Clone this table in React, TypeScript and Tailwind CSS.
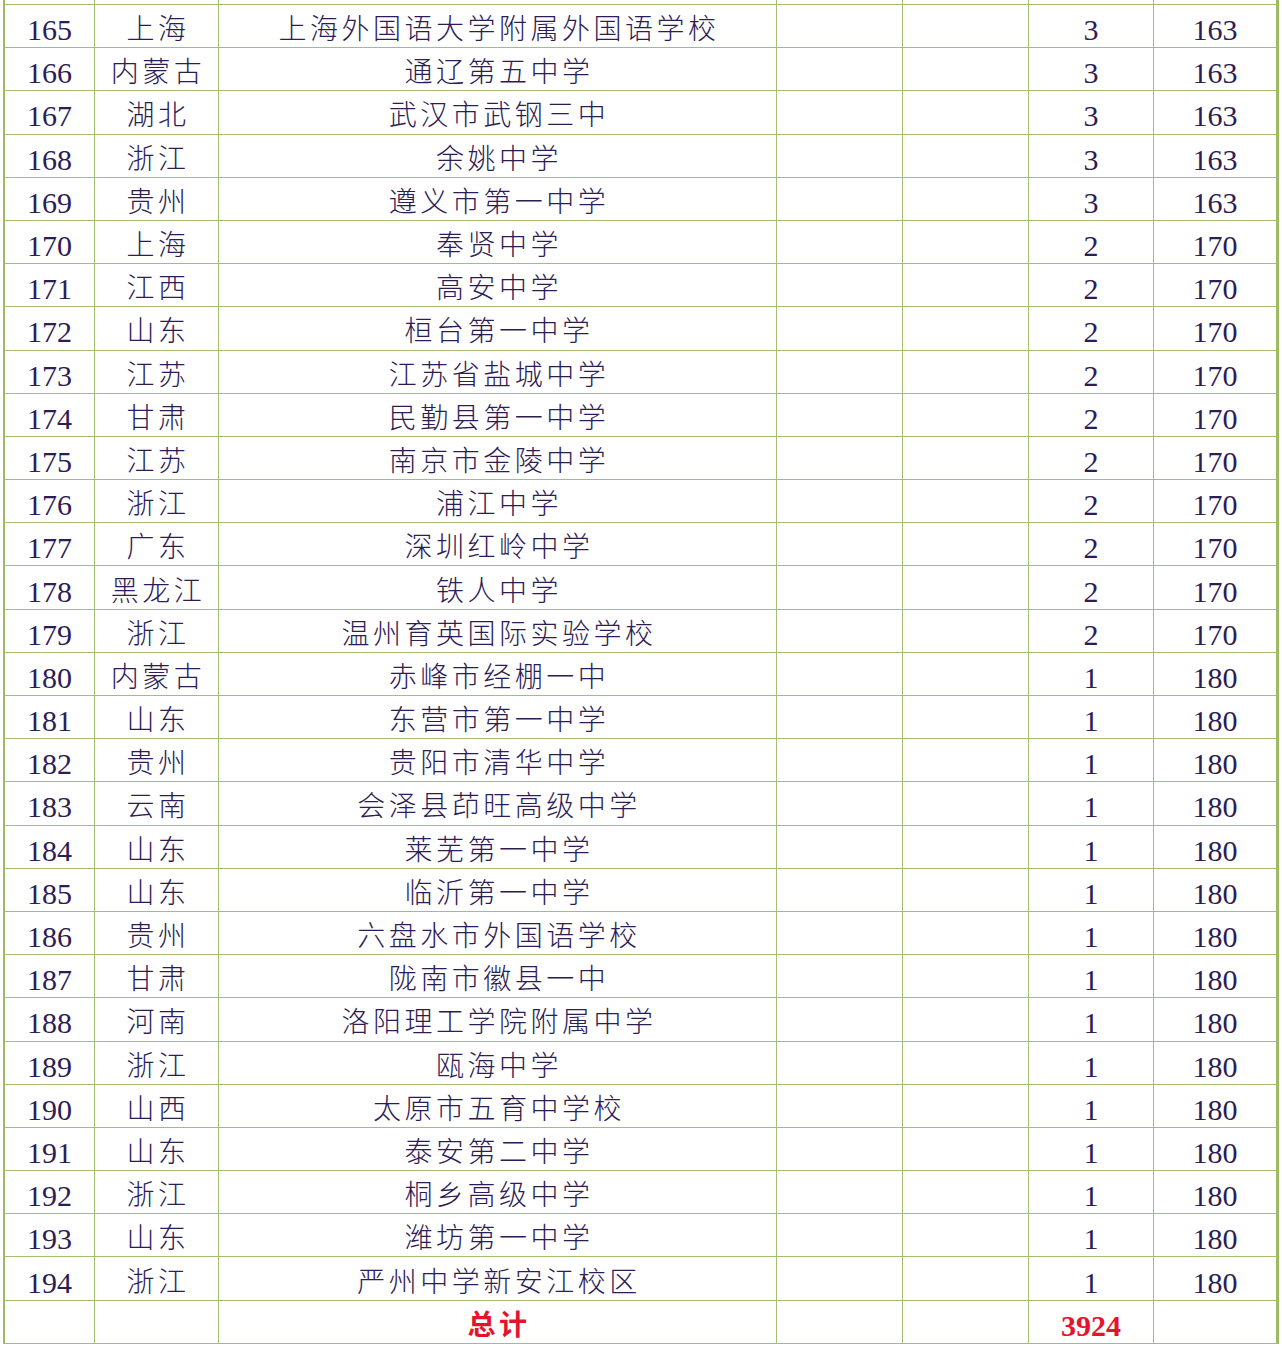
import React from "react";

type Row = [number, string, string, number, number];

const rows: Row[] = [
  [165, "上海", "上海外国语大学附属外国语学校", 3, 163],
  [166, "内蒙古", "通辽第五中学", 3, 163],
  [167, "湖北", "武汉市武钢三中", 3, 163],
  [168, "浙江", "余姚中学", 3, 163],
  [169, "贵州", "遵义市第一中学", 3, 163],
  [170, "上海", "奉贤中学", 2, 170],
  [171, "江西", "高安中学", 2, 170],
  [172, "山东", "桓台第一中学", 2, 170],
  [173, "江苏", "江苏省盐城中学", 2, 170],
  [174, "甘肃", "民勤县第一中学", 2, 170],
  [175, "江苏", "南京市金陵中学", 2, 170],
  [176, "浙江", "浦江中学", 2, 170],
  [177, "广东", "深圳红岭中学", 2, 170],
  [178, "黑龙江", "铁人中学", 2, 170],
  [179, "浙江", "温州育英国际实验学校", 2, 170],
  [180, "内蒙古", "赤峰市经棚一中", 1, 180],
  [181, "山东", "东营市第一中学", 1, 180],
  [182, "贵州", "贵阳市清华中学", 1, 180],
  [183, "云南", "会泽县茚旺高级中学", 1, 180],
  [184, "山东", "莱芜第一中学", 1, 180],
  [185, "山东", "临沂第一中学", 1, 180],
  [186, "贵州", "六盘水市外国语学校", 1, 180],
  [187, "甘肃", "陇南市徽县一中", 1, 180],
  [188, "河南", "洛阳理工学院附属中学", 1, 180],
  [189, "浙江", "瓯海中学", 1, 180],
  [190, "山西", "太原市五育中学校", 1, 180],
  [191, "山东", "泰安第二中学", 1, 180],
  [192, "浙江", "桐乡高级中学", 1, 180],
  [193, "山东", "潍坊第一中学", 1, 180],
  [194, "浙江", "严州中学新安江校区", 1, 180],
];

const grid =
  "grid grid-cols-[90px_124px_558px_126px_126px_125px_122px]";
const cell =
  "flex items-center justify-center border-r border-[#a3c06f] pt-[8px] overflow-hidden whitespace-nowrap";
const num = "text-[30px] leading-none";
const cjk = "text-[28px] leading-none tracking-[3.5px] pl-[3px] font-light";

function Line({ r }: { r: Row }) {
  return (
    <div className={`${grid} h-[43.2px] border-b border-[#a3c06f]`}>
      <div className={`${cell} ${num}`}>{r[0]}</div>
      <div className={`${cell} ${cjk}`}>{r[1]}</div>
      <div className={`${cell} ${cjk}`}>{r[2]}</div>
      <div className={cell}></div>
      <div className={cell}></div>
      <div className={`${cell} ${num}`}>{r[3]}</div>
      <div className={`${cell} ${num} border-r-0`}>{r[4]}</div>
    </div>
  );
}

export default function App() {
  return (
    <div
      className="w-[1282px] h-[1350px] bg-white overflow-hidden text-[#2d1c55]"
      style={{ fontFamily: '"Liberation Serif", "Noto Sans CJK SC", serif' }}
    >
      <div className="ml-[3px] w-[1276px] border-l-2 border-r-[3px] border-[#9dbb62]">
        {/* sliver of the row above */}
        <div className={`${grid} h-[5px] border-b border-[#a3c06f]`}>
          {[0, 1, 2, 3, 4, 5].map((i) => (
            <div key={i} className="border-r border-[#a3c06f]" />
          ))}
          <div />
        </div>
        {rows.map((r) => (
          <Line key={r[0]} r={r} />
        ))}
        <div className={`${grid} h-[43.2px] border-b border-[#a3c06f]`}>
          <div className={cell}></div>
          <div className={cell}></div>
          <div className={`${cell} ${cjk} !font-bold text-[#e3142c]`}>总计</div>
          <div className={cell}></div>
          <div className={cell}></div>
          <div className={`${cell} ${num} font-bold text-[#e3142c]`}>3924</div>
          <div className={`${cell} border-r-0`}></div>
        </div>
      </div>
    </div>
  );
}
